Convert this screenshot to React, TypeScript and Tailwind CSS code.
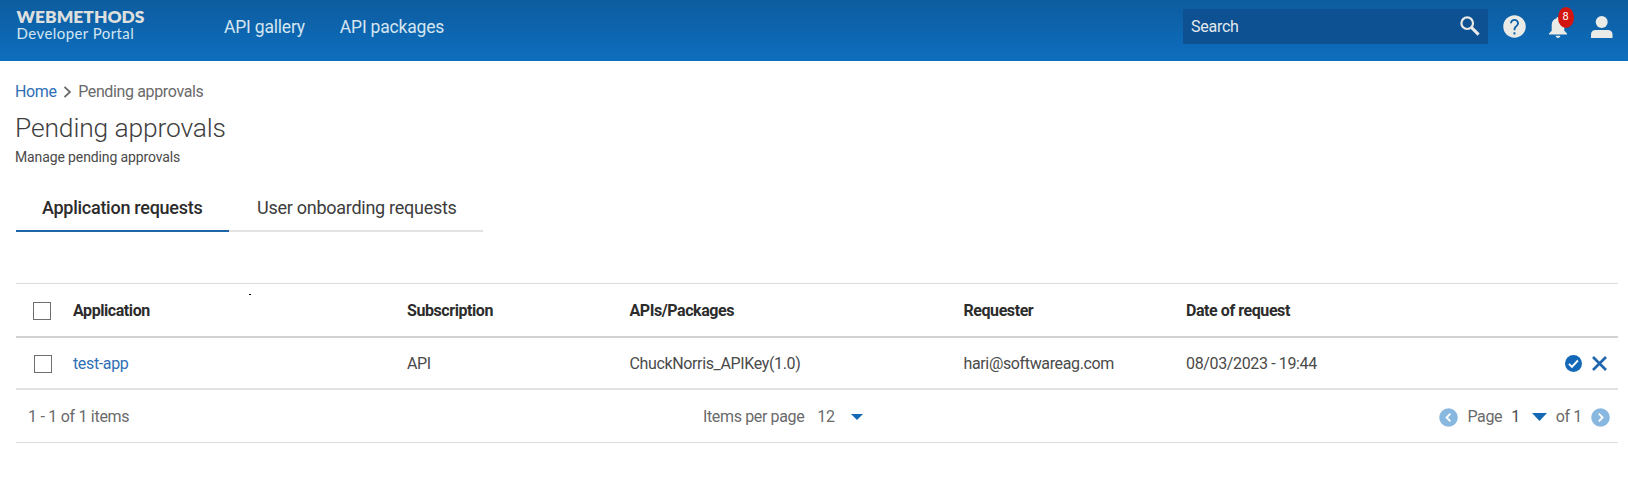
import React from "react";

const columns = "grid grid-cols-[57px_334px_222.5px_334px_222.5px_240px_1fr]";

function Checkbox({ className = "" }: { className?: string }) {
  return (
    <span
      role="checkbox"
      aria-checked="false"
      className={`block size-[18px] border border-[#6f6f6f] bg-white ${className}`}
    />
  );
}

function Caret({ className }: { className: string }) {
  return (
    <svg viewBox="0 0 14 8" preserveAspectRatio="none" className={className}>
      <path d="M0 0h14L7 8z" fill="#1468b4" />
    </svg>
  );
}

function PageButton({ direction }: { direction: "prev" | "next" }) {
  return (
    <svg viewBox="0 0 19 19" className="block size-[19px]">
      <circle cx="9.5" cy="9.5" r="9.3" fill="#88b7e0" />
      <path
        d={direction === "prev" ? "M11.4 5.6 7.6 9.5l3.8 3.9" : "M7.8 5.6l3.8 3.9-3.8 3.9"}
        fill="none"
        stroke="#fff"
        strokeWidth="1.9"
      />
    </svg>
  );
}

function Header() {
  return (
    <header className="flex h-[61px] items-start bg-linear-to-b from-[#0d5c9f] to-[#0d6ebf] text-[#d5e6f0]">
      <div className="w-[208px] pt-[7px] pl-[16.5px] font-[Lato,sans-serif]">
        <div className="text-[17.4px] leading-[20px] font-extrabold text-[#dcdfde]">WEBMETHODS</div>
        <div className="-mt-px text-[15px] leading-[14px] tracking-[0.43px] text-[#d3e6f1]">
          Developer Portal
        </div>
      </div>
      <nav className="flex gap-[35px] pt-[15px] pl-[16px] text-[17.5px] leading-[24px] tracking-[-0.2px]">
        <a>API gallery</a>
        <a>API packages</a>
      </nav>
      <div className="mt-[9px] mr-[15px] ml-auto flex h-[35px] items-center">
        <div className="flex h-[35px] w-[305px] items-center justify-between bg-[#0d5192] pr-[8px] pl-[8px] text-[16px] tracking-[-0.25px] text-[#e4e9ec]">
          <span className="pt-px">Search</span>
          <svg viewBox="0 0 20 20" className="-mt-[2px] size-[20px]" fill="none" stroke="#e9e9e6">
            <circle cx="7.2" cy="7.2" r="5.8" strokeWidth="2.2" />
            <path d="M11.6 11.6l7 7" strokeWidth="3" />
          </svg>
        </div>
        <svg viewBox="0 0 24 24" className="ml-[13px] size-[27px]">
          <path
            fill="#eaeae7"
            d="M12 2C6.48 2 2 6.48 2 12s4.48 10 10 10 10-4.48 10-10S17.52 2 12 2zm.8 17h-1.700v-1.900h1.700v1.900zm2.270-7.750l-.9.920C13.300 13.050 12.800 13.600 12.800 15.300h-1.600v-.6c0-1.100.45-2.100 1.170-2.830l1.240-1.260c.5-.5.7-.96.7-1.510 0-1.200-1-2.200-2.310-2.200s-2.310 1-2.310 2.300H8c0-2.210 1.790-3.900 4-3.900s4 1.690 4 3.900c0 .88-.36 1.480-.93 2.050z"
          />
        </svg>
        <div className="relative ml-[21px]">
          <svg viewBox="0 0 18 22" className="block h-[22px] w-[18px]" fill="#eaeae7">
            <path d="M7.6 2.2C7.6.7 10.4.7 10.4 2.2c3.3.8 4.9 3.5 4.9 6.8v5.8l2.7 2.6v1.200H0v-1.200l2.700-2.600V9c0-3.300 1.600-6 4.900-6.800zM6.700 19.800h4.600C11.300 22.600 6.700 22.600 6.700 19.800z" />
          </svg>
          <span className="absolute -top-[9px] left-[8.500px] flex h-[21px] w-[16px] items-center justify-center rounded-[50%] bg-[#d3150f] pb-[2px] text-[11px] leading-none text-white">
            8
          </span>
        </div>
        <svg viewBox="0 0 22 22" className="ml-[24px] size-[22px]" fill="#eaeae7">
          <circle cx="10.700" cy="6" r="6" />
          <path d="M0 22v-3.500C0 15.500 1.800 14 4.500 14h12.500c2.700 0 4.500 1.500 4.500 4.500V22z" />
        </svg>
      </div>
    </header>
  );
}

function Tabs() {
  return (
    <div className="mt-[24px] flex h-[42px] text-[18px] leading-[24px] tracking-[-0.27px] text-[#3c3c3c]">
      <div className="w-[213px] border-b-2 border-[#1d66a8] pt-[6px] pl-[26px] font-medium text-[#2b2b2b]">
        Application requests
      </div>
      <div className="w-[254px] border-b-2 border-[#e2e2e2] pt-[6px] pl-[28px]">
        User onboarding requests
      </div>
    </div>
  );
}

export default function App() {
  return (
    <div className="h-[481px] overflow-hidden bg-white font-[Roboto,sans-serif] text-[16px] text-[#4a4a4a]">
      <Header />
      <main className="pr-[10px] pl-[16px] tracking-[-0.36px]">
        <div className="mt-[19px] -ml-px flex h-[24px] items-center">
          <a className="text-[#2f6fb5]">Home</a>
          <svg viewBox="0 0 8 12" className="mx-[7px] h-[12px] w-[8px]" fill="none" stroke="#6a6a6a" strokeWidth="1.7">
            <path d="M.5 1 6 6 .5 11" />
          </svg>
          <span className="-ml-[0.500px] text-[#6a6a6a]">Pending approvals</span>
        </div>
        <h1 className="mt-[8px] -ml-px h-[32px] text-[26.4px] leading-[32px] font-light tracking-[-0.13px] text-[#3e3e3e]">
          Pending approvals
        </h1>
        <p className="mt-[4px] -ml-px h-[18px] text-[14px] leading-[18px] tracking-[-0.12px] text-[#4a4a4a]">
          Manage pending approvals
        </p>
        <Tabs />
        <section className="mt-[51px] border-t border-[#dcdcdc]">
          <div className={`${columns} relative h-[54px] items-center border-b-2 border-[#d2d2d2] pt-[2px] font-bold tracking-[-0.43px] text-[#2c2c2c]`}>
            <Checkbox className="ml-[17px]" />
            <span>Application</span>
            <span>Subscription</span>
            <span>APIs/Packages</span>
            <span>Requester</span>
            <span>Date of request</span>
            <i className="absolute top-[10px] left-[233px] h-px w-[1.500px] bg-black" />
          </div>
          <div className={`${columns} h-[52px] items-center border-b-2 border-[#e2e2e2] pt-[2px]`}>
            <Checkbox className="ml-[18px]" />
            <a className="text-[#2f6fb5]">test-app</a>
            <span>API</span>
            <span>ChuckNorris_APIKey(1.0)</span>
            <span>hari@softwareag.com</span>
            <span>08/03/2023 - 19:44</span>
            <div className="-mt-px flex items-center justify-end gap-[10px] pr-[11px]">
              <svg viewBox="0 0 17 17" className="size-[17px]">
                <circle cx="8.500" cy="8.500" r="8.500" fill="#1468b8" />
                <path d="M4 8.900l2.900 2.900 6-6.300" fill="none" stroke="#fff" strokeWidth="1.900" />
              </svg>
              <svg viewBox="0 0 15 15" className="size-[15px]">
                <path d="M1 1l13 13M14 1L1 14" stroke="#1f66ae" strokeWidth="2.700" />
              </svg>
            </div>
          </div>
          <div className="flex h-[53px] items-center border-b border-[#dcdcdc] pt-[2px] pl-[12px] text-[#6a6a6a]">
            <span className="w-[675px] tracking-[-0.28px]">1 - 1 of 1 items</span>
            <span>Items per page</span>
            <span className="ml-[13px]">12</span>
            <Caret className="ml-[16px] h-[6px] w-[12px]" />
            <div className="ml-auto flex items-center pr-[8px]">
              <PageButton direction="prev" />
              <span className="ml-[9px]">Page</span>
              <span className="ml-[9px] text-[#4a4a4a]">1</span>
              <Caret className="mr-[9px] ml-[12px] h-[8px] w-[15px]" />
              <span className="mr-[9px]">of 1</span>
              <PageButton direction="next" />
            </div>
          </div>
        </section>
      </main>
    </div>
  );
}
